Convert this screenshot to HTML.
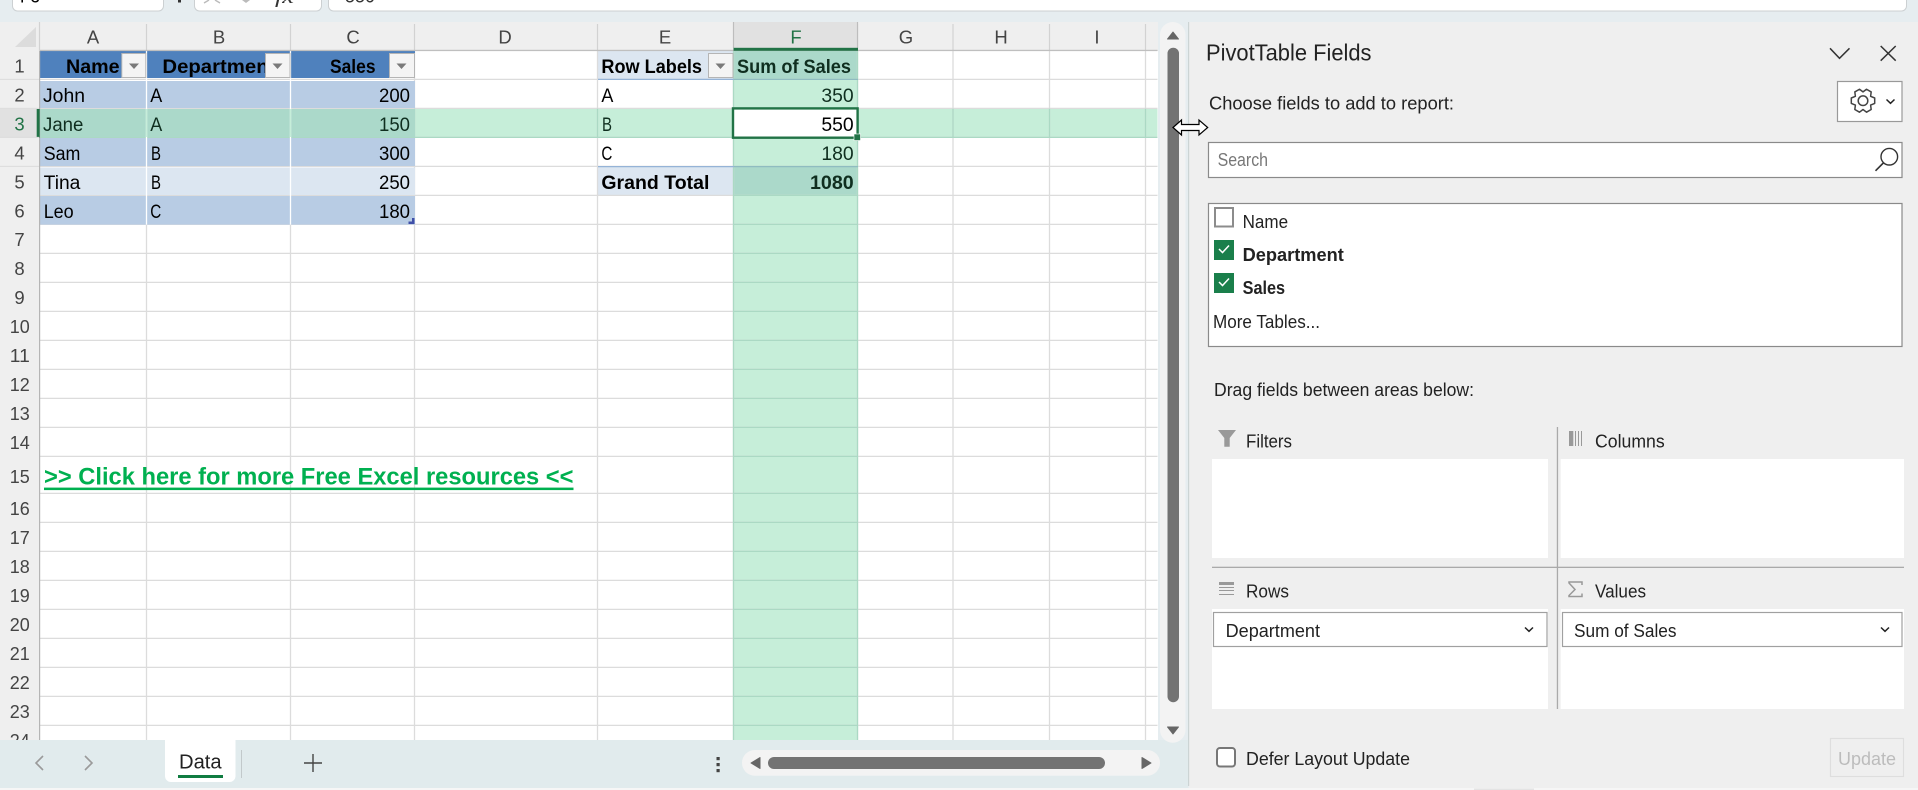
<!DOCTYPE html>
<html><head><meta charset="utf-8"><title>PivotTable</title>
<style>
html,body{margin:0;padding:0;width:1918px;height:790px;overflow:hidden;background:#e6edf0}
svg{display:block}
text{font-family:"Liberation Sans",sans-serif;font-size:19px;fill:#000}
.b{font-weight:700}
.h{fill:#444;font-size:18.5px}
.p{fill:#222;font-size:18.5px}
.g{fill:#0f2e1f}
</style></head><body>
<svg xmlns="http://www.w3.org/2000/svg" width="1918" height="790" viewBox="0 0 1918 790">
<rect width="1918" height="790" fill="#e6edf0"/>
<!-- top bar -->
<rect x="12.5" y="-12" width="151" height="23" rx="5" fill="#fff" stroke="#ccd0d2"/>
<rect x="194.5" y="-12" width="127" height="23" rx="5" fill="#fff" stroke="#ccd0d2"/>
<rect x="328.5" y="-12" width="1578" height="23" rx="5" fill="#fff" stroke="#ccd0d2"/>
<text x="20" y="2.5" textLength="20" lengthAdjust="spacingAndGlyphs" fill="#333">F3</text>
<rect x="178" y="0" width="3" height="2.5" fill="#333"/>
<path d="M204 3l5-3M220 3l-5-3" stroke="#bbb" stroke-width="1.4" fill="none"/>
<path d="M242 0l4 3 4-3" fill="#bbb"/>
<text x="275" y="3" textLength="19" lengthAdjust="spacingAndGlyphs" font-style="italic" style="font-family:'Liberation Serif',serif;fill:#333">fx</text>
<text x="345" y="2.5" textLength="30" lengthAdjust="spacingAndGlyphs" style="fill:#333">550</text>

<!-- grid area -->
<rect x="0" y="22" width="1158" height="718" fill="#fff"/>
<rect x="0" y="22" width="1158" height="29" fill="#efefef"/>
<rect x="0" y="51" width="40" height="689" fill="#efefef"/>
<path d="M36 27v20H15z" fill="#dcdcdc"/>

<!-- row 3 highlight -->
<rect x="40" y="108.6" width="1117.5" height="29" fill="#c6eed9"/>
<!-- column F -->
<rect x="734" y="51" width="124" height="689" fill="#c6eed9"/>
<rect x="734" y="51" width="124" height="28.4" fill="#abd9ca"/>
<rect x="734" y="167" width="124" height="28.4" fill="#abd9ca"/>
<!-- pivot E shading -->
<rect x="598" y="51" width="136" height="28.4" fill="#dce6f1"/>
<rect x="598" y="167" width="136" height="28.4" fill="#dce6f1"/>

<!-- grid lines -->
<path fill="none" stroke="#dcdcdc" stroke-width="1.3" d="M40 79.4H1157.5M40 108.4H1157.5M40 137.4H1157.5M40 166.4H1157.5M40 195.4H1157.5M40 224.4H1157.5M40 253.4H1157.5M40 282.4H1157.5M40 311.4H1157.5M40 340.4H1157.5M40 369.4H1157.5M40 398.4H1157.5M40 427.4H1157.5M40 456.4H1157.5M40 493.4H1157.5M40 522.4H1157.5M40 551.4H1157.5M40 580.4H1157.5M40 609.4H1157.5M40 638.4H1157.5M40 667.4H1157.5M40 696.4H1157.5M40 725.4H1157.5
M146.5 51V740M290.5 51V740M414.5 51V740M597.5 51V740M733.5 51V740M857.5 51V740M953 51V740M1049.5 51V740M1145.5 51V740"/>
<!-- green grid lines -->
<path fill="none" stroke="#abd9c4" stroke-width="1.3" d="M734 79.4H858M734 137.4H858M734 166.4H858M734 195.4H858M734 224.4H858M734 253.4H858M734 282.4H858M734 311.4H858M734 340.4H858M734 369.4H858M734 398.4H858M734 427.4H858M734 456.4H858M734 493.4H858M734 522.4H858M734 551.4H858M734 580.4H858M734 609.4H858M734 638.4H858M734 667.4H858M734 696.4H858M734 725.4H858
M733.5 51V740M857.5 51V740M40 137.4H1157.5M953 108.6V137.5M1049.5 108.6V137.5M1145.5 108.6V137.5M414.5 108.6V137.5M597.5 108.6V137.5"/>
<path fill="none" stroke="#95b3d7" stroke-width="1.2" d="M598 79.4H734M598 166.6H734"/>
<path fill="none" stroke="#8fbcc0" stroke-width="1.2" d="M734 79.4H858M734 166.6H858"/>

<!-- data table -->
<rect x="40" y="51" width="375" height="27" fill="#4f81bd"/>
<rect x="40" y="81" width="375" height="27" fill="#b8cce4"/>
<rect x="40" y="109" width="375" height="28" fill="#abd9ca"/>
<rect x="40" y="138" width="375" height="28" fill="#b8cce4"/>
<rect x="40" y="167.5" width="375" height="27.5" fill="#dce6f1"/>
<rect x="40" y="196" width="375" height="28.6" fill="#b8cce4"/>
<path fill="none" stroke="#fff" stroke-width="1.3" d="M146.5 51V224.6M290.5 51V224.6"/>
<path fill="none" stroke="#c6eed9" stroke-width="1.3" d="M146.5 109V137M290.5 109V137"/>
<path fill="#3f4fa8" d="M414.5 218v6h-6v-2.5h3.5V218z"/>

<!-- column headers -->
<path fill="none" stroke="#d2d2d2" stroke-width="1.2" d="M39.5 22V51M146.5 24V50M290.5 24V50M414.5 24V50M597.5 24V50M857.5 24V50M953 24V50M1049.5 24V50M1145.5 24V50"/>
<rect x="734" y="22" width="124" height="26" fill="#e1e1e1"/>
<path stroke="#bdbdbd" stroke-width="1.2" d="M733.5 22V48M857.5 22V48"/>
<rect x="40" y="49.8" width="1117.5" height="1.3" fill="#bfbfbf"/>
<rect x="733.5" y="47.8" width="124.5" height="3" fill="#217346"/>
<rect x="39" y="51" width="1.2" height="689" fill="#b5b5b5"/>
<text class="h" x="93" y="43.5" text-anchor="middle">A</text>
<text class="h" x="219" y="43.5" text-anchor="middle">B</text>
<text class="h" x="353" y="43.5" text-anchor="middle">C</text>
<text class="h" x="505" y="43.5" text-anchor="middle">D</text>
<text class="h" x="665" y="43.5" text-anchor="middle">E</text>
<text class="h" x="796" y="43.5" text-anchor="middle" style="fill:#217346">F</text>
<text class="h" x="906" y="43.5" text-anchor="middle">G</text>
<text class="h" x="1001" y="43.5" text-anchor="middle">H</text>
<text class="h" x="1097" y="43.5" text-anchor="middle">I</text>

<!-- row headers -->
<rect x="0" y="109" width="37" height="28.5" fill="#e1e1e1"/>
<rect x="36.7" y="109" width="3" height="28.5" fill="#217346"/>
<path fill="none" stroke="#dcdcdc" stroke-width="1" d="M0 79.4H39M0 108.4H39M0 137.4H39M0 166.4H39"/>
<text class="h" x="19.5" y="72.5" text-anchor="middle">1</text>
<text class="h" x="19.5" y="101.5" text-anchor="middle">2</text>
<text class="h" x="19.5" y="130.5" text-anchor="middle" style="fill:#217346">3</text>
<text class="h" x="19.5" y="159.5" text-anchor="middle">4</text>
<text class="h" x="19.5" y="188.5" text-anchor="middle">5</text>
<text class="h" x="19.5" y="217.5" text-anchor="middle">6</text>
<text class="h" x="19.5" y="246" text-anchor="middle">7</text>
<text class="h" x="19.5" y="275" text-anchor="middle">8</text>
<text class="h" x="19.5" y="304" text-anchor="middle">9</text>
<text class="h" x="9.8" y="333" textLength="20" lengthAdjust="spacingAndGlyphs">10</text>
<text class="h" x="9.8" y="362" textLength="20" lengthAdjust="spacingAndGlyphs">11</text>
<text class="h" x="9.8" y="391" textLength="20" lengthAdjust="spacingAndGlyphs">12</text>
<text class="h" x="9.8" y="420" textLength="20" lengthAdjust="spacingAndGlyphs">13</text>
<text class="h" x="9.8" y="449" textLength="20" lengthAdjust="spacingAndGlyphs">14</text>
<text class="h" x="9.8" y="483" textLength="20" lengthAdjust="spacingAndGlyphs">15</text>
<text class="h" x="9.8" y="515" textLength="20" lengthAdjust="spacingAndGlyphs">16</text>
<text class="h" x="9.8" y="544" textLength="20" lengthAdjust="spacingAndGlyphs">17</text>
<text class="h" x="9.8" y="573" textLength="20" lengthAdjust="spacingAndGlyphs">18</text>
<text class="h" x="9.8" y="602" textLength="20" lengthAdjust="spacingAndGlyphs">19</text>
<text class="h" x="9.8" y="631" textLength="20" lengthAdjust="spacingAndGlyphs">20</text>
<text class="h" x="9.8" y="660" textLength="20" lengthAdjust="spacingAndGlyphs">21</text>
<text class="h" x="9.8" y="689" textLength="20" lengthAdjust="spacingAndGlyphs">22</text>
<text class="h" x="9.8" y="718" textLength="20" lengthAdjust="spacingAndGlyphs">23</text>
<text class="h" x="9.8" y="747" textLength="20" lengthAdjust="spacingAndGlyphs">24</text>

<!-- table text -->
<text class="b" x="66" y="73" textLength="53.6" lengthAdjust="spacingAndGlyphs">Name</text>
<text class="b" x="162.4" y="73" textLength="113" lengthAdjust="spacingAndGlyphs">Department</text>
<text class="b" x="330" y="73" textLength="45.5" lengthAdjust="spacingAndGlyphs">Sales</text>
<text x="43" y="102" textLength="42" lengthAdjust="spacingAndGlyphs">John</text>
<text x="150.2" y="102" textLength="12" lengthAdjust="spacingAndGlyphs">A</text>
<text x="379" y="102" textLength="31" lengthAdjust="spacingAndGlyphs">200</text>
<text x="43" y="131" textLength="40.4" lengthAdjust="spacingAndGlyphs" class="g">Jane</text>
<text x="150.2" y="131" textLength="12" lengthAdjust="spacingAndGlyphs" class="g">A</text>
<text x="379" y="131" textLength="31" lengthAdjust="spacingAndGlyphs" class="g">150</text>
<text x="43.7" y="160" textLength="36.7" lengthAdjust="spacingAndGlyphs">Sam</text>
<text x="151" y="160" textLength="10" lengthAdjust="spacingAndGlyphs">B</text>
<text x="379" y="160" textLength="31" lengthAdjust="spacingAndGlyphs">300</text>
<text x="43.7" y="189" textLength="36.7" lengthAdjust="spacingAndGlyphs">Tina</text>
<text x="151" y="189" textLength="10" lengthAdjust="spacingAndGlyphs">B</text>
<text x="379" y="189" textLength="31" lengthAdjust="spacingAndGlyphs">250</text>
<text x="43.7" y="218" textLength="30" lengthAdjust="spacingAndGlyphs">Leo</text>
<text x="150.2" y="218" textLength="11" lengthAdjust="spacingAndGlyphs">C</text>
<text x="379" y="218" textLength="31" lengthAdjust="spacingAndGlyphs">180</text>

<!-- filter buttons -->
<g fill="#f4f4f4" stroke="#b5b5b5" stroke-width="1">
<rect x="121.8" y="53.5" width="24" height="24"/>
<rect x="265.5" y="53.5" width="24.5" height="24"/>
<rect x="389.5" y="53.5" width="25" height="24"/>
<rect x="708.5" y="53.5" width="24.5" height="24"/>
</g>
<path fill="#7a7a7a" d="M129 63.5h10l-5 5.5zM272.5 63.5h10l-5 5.5zM396.5 63.5h10l-5 5.5zM715.5 63.5h10l-5 5.5z"/>

<!-- pivot text -->
<text class="b" x="601.4" y="73" textLength="100.6" lengthAdjust="spacingAndGlyphs">Row Labels</text>
<text class="b g" x="737" y="73" textLength="114" lengthAdjust="spacingAndGlyphs">Sum of Sales</text>
<text x="601.4" y="102" textLength="12" lengthAdjust="spacingAndGlyphs">A</text>
<text class="g" x="821.4" y="102" textLength="32.3" lengthAdjust="spacingAndGlyphs">350</text>
<text x="602" y="131" textLength="10" lengthAdjust="spacingAndGlyphs" class="g">B</text>
<text x="601.4" y="160" textLength="11" lengthAdjust="spacingAndGlyphs">C</text>
<text class="g" x="821.4" y="160" textLength="32.3" lengthAdjust="spacingAndGlyphs">180</text>
<text class="b" x="601.4" y="189" textLength="108" lengthAdjust="spacingAndGlyphs">Grand Total</text>
<text class="b g" x="810" y="189" textLength="43.7" lengthAdjust="spacingAndGlyphs">1080</text>

<!-- selected cell -->
<rect x="733" y="108.4" width="124.6" height="29.3" fill="#fff" stroke="#217346" stroke-width="2.4"/>
<text x="821.4" y="131" textLength="32.3" lengthAdjust="spacingAndGlyphs">550</text>
<rect x="854" y="134" width="6.5" height="6.5" fill="#217346" stroke="#fff" stroke-width=".6"/>

<!-- link -->
<text class="b" x="44" y="484.5" textLength="529.5" lengthAdjust="spacingAndGlyphs" style="font-size:24.5px;fill:#00b050">&gt;&gt; Click here for more Free Excel resources &lt;&lt;</text>
<rect x="44" y="487.6" width="529.5" height="2.5" fill="#00b050"/>

<!-- tab bar -->
<rect x="0" y="740" width="1188" height="48" fill="#e1ebed"/>
<rect x="0" y="788" width="1918" height="2" fill="#f6f6f6"/>
<path d="M165 740h70.5v36a6 6 0 0 1-6 6h-58.5a6 6 0 0 1-6-6z" fill="#fff"/>
<text x="179" y="768.5" textLength="42.6" lengthAdjust="spacingAndGlyphs" style="fill:#222;font-size:20px;-webkit-text-stroke:.35px #222">Data</text>
<rect x="178" y="775" width="45" height="3" fill="#107c41"/>
<rect x="241" y="750" width="1" height="28" fill="#c2c9cb"/>
<path d="M43 756l-7 7 7 7M85 756l7 7-7 7" fill="none" stroke="#9a9a9a" stroke-width="1.6"/>
<path d="M313 754v18M304 763h18" fill="none" stroke="#444" stroke-width="1.4"/>
<g fill="#444"><rect x="716.5" y="757" width="3.2" height="3.2"/><rect x="716.5" y="763" width="3.2" height="3.2"/><rect x="716.5" y="769" width="3.2" height="3.2"/></g>

<!-- h scrollbar -->
<rect x="742" y="750" width="418" height="25.7" rx="12.8" fill="#f3f3f3"/>
<rect x="768" y="757" width="337" height="12" rx="6" fill="#737373"/>
<path d="M760 757.5v11l-9-5.5zM1142 757.5v11l9-5.5z" fill="#666" stroke="#666" stroke-linejoin="round"/>

<!-- v scrollbar -->
<rect x="1160" y="22" width="25.5" height="720.7" rx="12.7" fill="#f3f3f3"/>
<rect x="1167.5" y="47.7" width="11.5" height="654.5" rx="5.7" fill="#737373"/>
<path d="M1173 32l5.5 7h-11zM1173 734l-5.5-7h11z" fill="#666" stroke="#666" stroke-linejoin="round"/>

<!-- panel -->
<rect x="1189" y="22" width="729" height="766" fill="#efefef"/>
<rect x="1188" y="22" width="1.2" height="764" fill="#ccd4d4"/>
<rect x="1474" y="788.5" width="60" height="1.5" fill="#e4e4e4"/>
<text class="p" x="1206" y="60.5" textLength="165.5" lengthAdjust="spacingAndGlyphs" style="font-size:23px;-webkit-text-stroke:.2px #222">PivotTable Fields</text>
<path d="M1830 48.3l9.5 10 10-10M1880.7 46l15 14.7M1895.7 46l-15 14.7" fill="none" stroke="#333" stroke-width="1.5"/>
<text class="p" x="1209" y="109.5" textLength="245" lengthAdjust="spacingAndGlyphs">Choose fields to add to report:</text>

<rect x="1837.5" y="81.5" width="64.5" height="40" fill="#fff" stroke="#999" stroke-width="1.2"/>
<g transform="translate(1863 100.7)" fill="none" stroke="#444" stroke-width="1.5" stroke-linejoin="round">
<path d="M11.69-2.7L11.69 2.7L7.62 4.4L8.18 8.78L3.51 11.48L0 8.8L-3.51 11.48L-8.18 8.78L-7.62 4.4L-11.69 2.7L-11.69-2.7L-7.62-4.4L-8.18-8.78L-3.51-11.48L0-8.8L3.51-11.48L8.18-8.78L7.62-4.4Z"/>
<circle r="4.8"/>
</g>
<path d="M1886.5 99.5l4 3.8 4-3.8" fill="none" stroke="#222" stroke-width="1.5"/>

<rect x="1208.5" y="142.5" width="693.5" height="35" fill="#fff" stroke="#8a8a8a" stroke-width="1.2"/>
<text x="1217.6" y="166" textLength="50.4" lengthAdjust="spacingAndGlyphs" style="fill:#777;font-size:18.5px">Search</text>
<circle cx="1889.3" cy="156.7" r="8.3" fill="none" stroke="#333" stroke-width="1.4"/>
<path d="M1883.3 163l-7.8 7.8" fill="none" stroke="#333" stroke-width="1.6"/>

<rect x="1208.5" y="203.5" width="693.5" height="143" fill="#fff" stroke="#8a8a8a" stroke-width="1.2"/>
<rect x="1215" y="208" width="18" height="18.5" fill="#fff" stroke="#8c8c8c" stroke-width="2"/>
<text class="p" x="1242.6" y="228" textLength="45.5" lengthAdjust="spacingAndGlyphs">Name</text>
<rect x="1214" y="240" width="20" height="20" fill="#1a7f4b"/>
<path d="M1219 249l3.5 3.5 6.5-7" fill="none" stroke="#fff" stroke-width="1.5"/>
<text class="p b" x="1242.6" y="261" textLength="101.2" lengthAdjust="spacingAndGlyphs">Department</text>
<rect x="1214" y="273" width="20" height="20" fill="#1a7f4b"/>
<path d="M1219 282l3.5 3.5 6.5-7" fill="none" stroke="#fff" stroke-width="1.5"/>
<text class="p b" x="1242.6" y="294" textLength="42.5" lengthAdjust="spacingAndGlyphs">Sales</text>
<text class="p" x="1213" y="328" textLength="107" lengthAdjust="spacingAndGlyphs">More Tables...</text>

<text class="p" x="1214" y="396" textLength="260" lengthAdjust="spacingAndGlyphs">Drag fields between areas below:</text>

<path d="M1218 430h18l-6.3 8v8.7h-5.4V438z" fill="#999"/>
<text class="p" x="1246" y="447.5" textLength="46" lengthAdjust="spacingAndGlyphs">Filters</text>
<g fill="#999"><rect x="1569" y="431" width="4.3" height="15"/><rect x="1575" y="431" width="1" height="15"/><rect x="1578" y="431" width="1" height="15"/><rect x="1581" y="431" width="1" height="15"/></g>
<text class="p" x="1595" y="447.5" textLength="69.7" lengthAdjust="spacingAndGlyphs">Columns</text>

<rect x="1212" y="459" width="336" height="99" fill="#fff"/>
<rect x="1560.7" y="459" width="343.3" height="99" fill="#fff"/>
<rect x="1212" y="566.7" width="692" height="1.3" fill="#aaa"/>
<rect x="1556.8" y="427" width="1.3" height="282" fill="#aaa"/>

<path d="M1219 582h15v3h-15zM1219 587h15v1h-15zM1219 590h15v1h-15zM1219 594h15v1h-15z" fill="#999"/>
<text class="p" x="1246" y="597.5" textLength="43" lengthAdjust="spacingAndGlyphs">Rows</text>
<path d="M1582 585v-3h-13v1l6 6.5-6 6v1h13v-3" fill="none" stroke="#999" stroke-width="1.5"/>
<text class="p" x="1595" y="597.5" textLength="51" lengthAdjust="spacingAndGlyphs">Values</text>

<rect x="1212" y="609" width="336" height="100" fill="#fff"/>
<rect x="1560.7" y="609" width="343.3" height="100" fill="#fff"/>
<rect x="1213.5" y="612.5" width="333.5" height="34" fill="#fff" stroke="#a0a0a0" stroke-width="1.2"/>
<rect x="1562.5" y="612.5" width="339.5" height="34" fill="#fff" stroke="#a0a0a0" stroke-width="1.2"/>
<text class="p" x="1225.6" y="637" textLength="94.4" lengthAdjust="spacingAndGlyphs">Department</text>
<text class="p" x="1574" y="637" textLength="102.5" lengthAdjust="spacingAndGlyphs">Sum of Sales</text>
<path d="M1525 627.5l4 3.8 4-3.8M1881 627.5l4 3.8 4-3.8" fill="none" stroke="#222" stroke-width="1.5"/>

<rect x="1217" y="748" width="18" height="18.5" rx="3" fill="#fff" stroke="#777" stroke-width="2"/>
<text class="p" x="1246" y="765" textLength="164" lengthAdjust="spacingAndGlyphs">Defer Layout Update</text>
<rect x="1830.5" y="738.5" width="73" height="38" fill="none" stroke="#dedede" stroke-width="1.2"/>
<text x="1838" y="765" textLength="58" lengthAdjust="spacingAndGlyphs" style="fill:#bcbcbc;font-size:18.5px">Update</text>

<!-- cursor -->
<path d="M1173 127.5l8.5-7.5v4.5h17.5V120l8.7 7.5-8.7 7.5v-4.5h-17.5v4.5z" fill="#fff" stroke="#000" stroke-width="1.2" stroke-linejoin="miter"/>
</svg>
</body></html>
